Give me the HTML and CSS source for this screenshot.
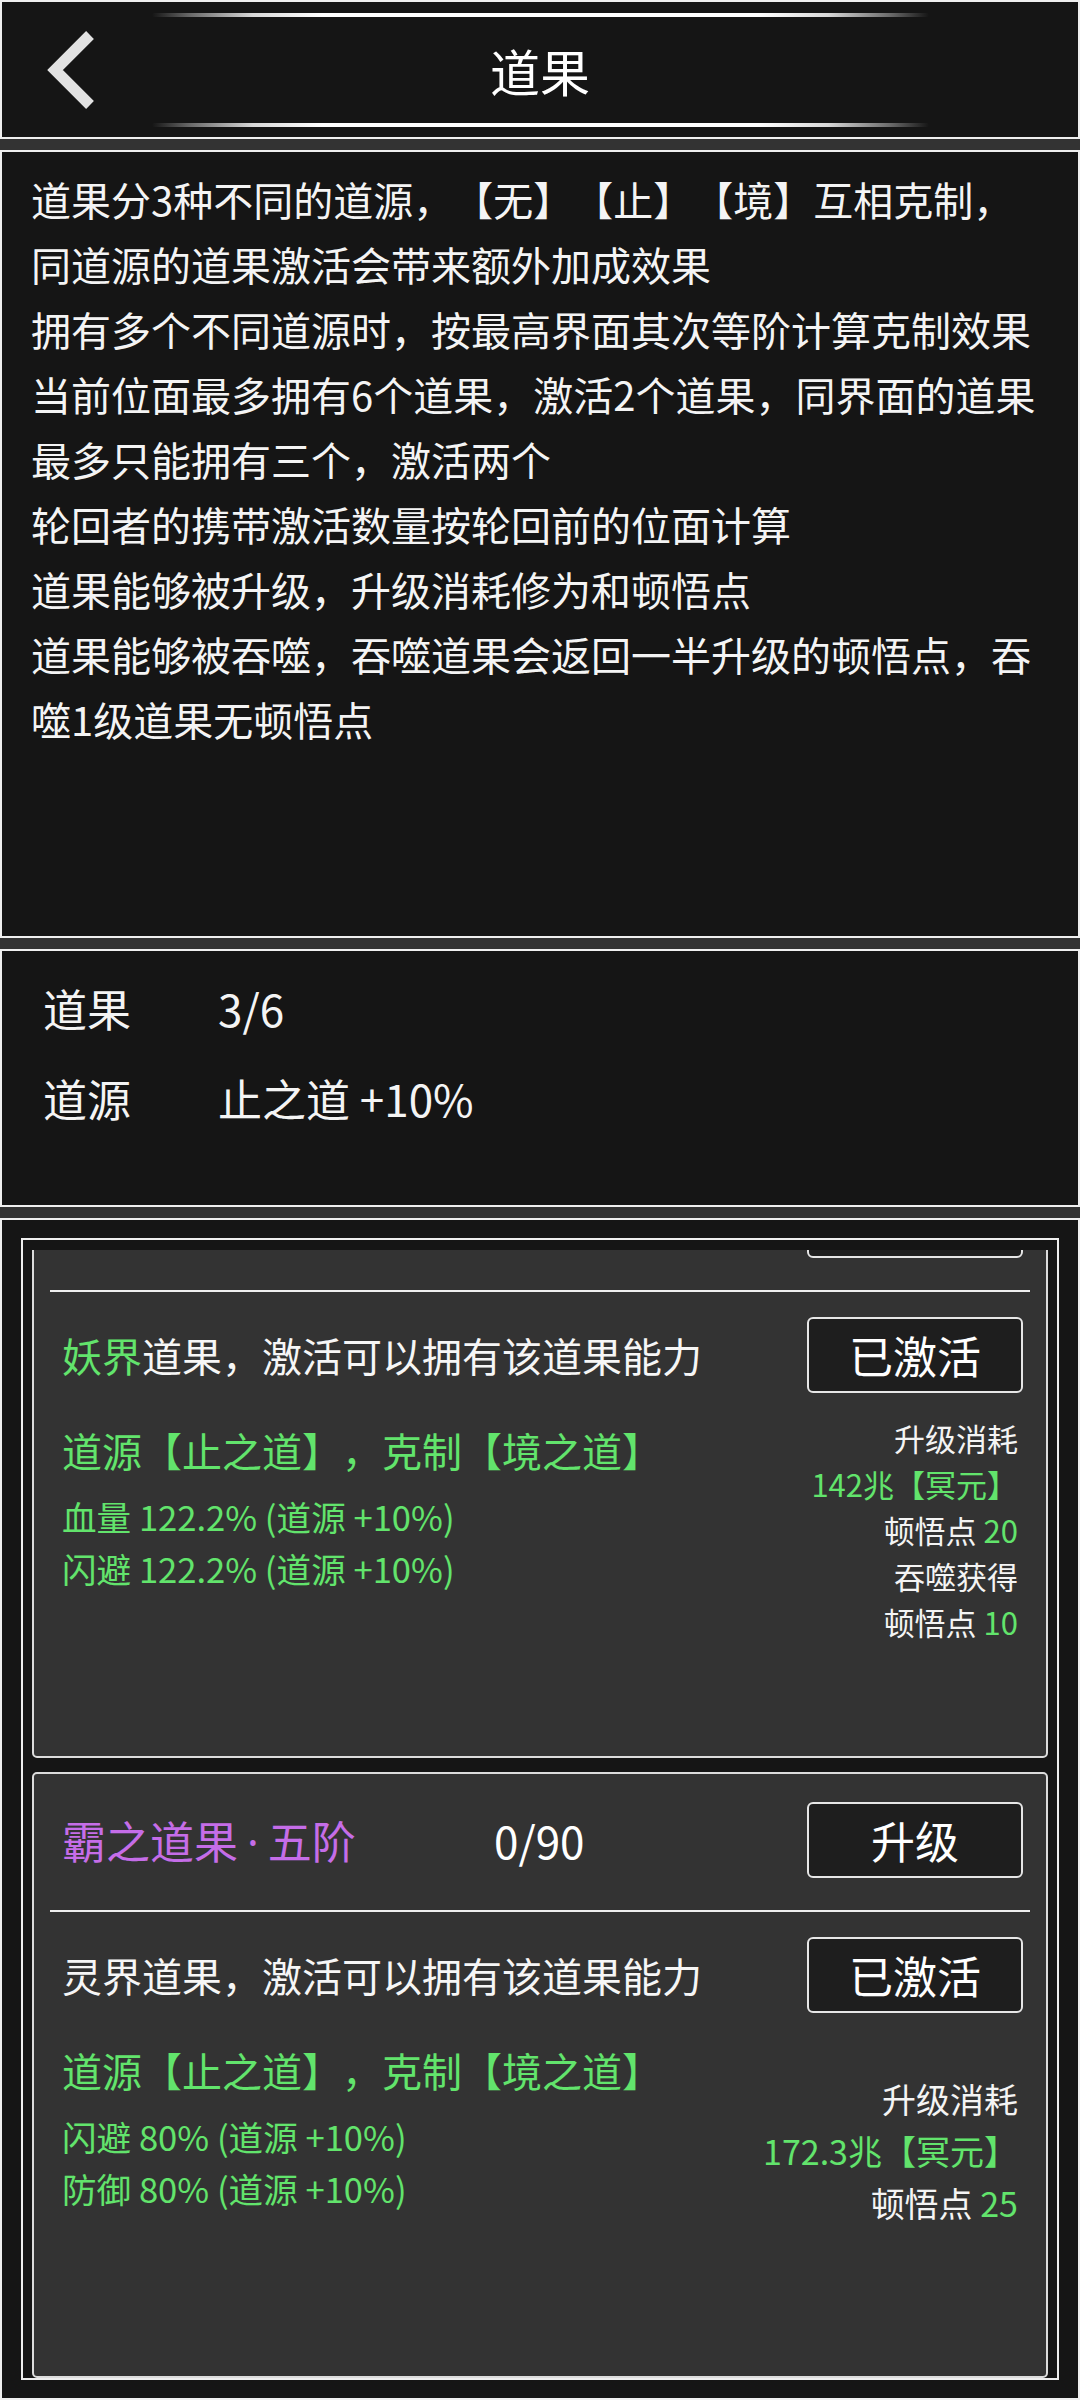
FILE: index.html
```html
<!DOCTYPE html>
<html lang="zh-CN">
<head>
<meta charset="utf-8">
<title>道果</title>
<link rel="stylesheet" href="styles.css">
</head>
<body>
  <header class="panel header">
    <div class="header__rule"></div>
    <div class="header__bar">
      <svg class="back" width="60" height="80" viewBox="0 0 60 80" aria-label="返回">
        <polyline points="50,5 15,40 50,75" fill="none" stroke="#e2e2e2" stroke-width="11" stroke-linejoin="miter" stroke-linecap="butt"/>
      </svg>
      <h1 class="header__title">道果</h1>
      <span></span>
    </div>
    <div class="header__rule"></div>
  </header>

  <section class="panel intro">
    <p>道果分3种不同的道源，【无】【止】【境】互相克制，同道源的道果激活会带来额外加成效果</p>
    <p>拥有多个不同道源时，按最高界面其次等阶计算克制效果</p>
    <p>当前位面最多拥有6个道果，激活2个道果，同界面的道果最多只能拥有三个，激活两个</p>
    <p>轮回者的携带激活数量按轮回前的位面计算</p>
    <p>道果能够被升级，升级消耗修为和顿悟点</p>
    <p>道果能够被吞噬，吞噬道果会返回一半升级的顿悟点，吞噬1级道果无顿悟点</p>
  </section>

  <section class="panel stats">
    <div class="stats__row"><span class="stats__label">道果</span><span>3/6</span></div>
    <div class="stats__row"><span class="stats__label">道源</span><span>止之道 +10%</span></div>
  </section>

  <section class="panel listpanel">
    <div class="frame">
      <div class="viewport">
        <div class="list">
          <article class="card">
            <div class="card__head">
              <span class="card__title"></span>
              <span class="card__count"></span>
              <span class="btn"></span>
            </div>
            <div class="card__divider"></div>
            <div class="card__desc">
              <span class="desc"><span class="green">妖界</span>道果，激活可以拥有该道果能力</span>
              <span class="btn">已激活</span>
            </div>
            <div class="card__body">
              <div class="effects">
                <div class="effects__src">道源【止之道】，克制【境之道】</div>
                <div class="effects__stat">血量 122.2% (道源 +10%)</div>
                <div class="effects__stat">闪避 122.2% (道源 +10%)</div>
              </div>
              <div class="cost">
                <div>升级消耗</div>
                <div class="green">142兆【冥元】</div>
                <div>顿悟点 <span class="green">20</span></div>
                <div>吞噬获得</div>
                <div>顿悟点 <span class="green">10</span></div>
              </div>
            </div>
          </article>

          <article class="card">
            <div class="card__head">
              <span class="card__title">霸之道果<span class="dot">·</span>五阶</span>
              <span class="card__count">0/90</span>
              <span class="btn">升级</span>
            </div>
            <div class="card__divider"></div>
            <div class="card__desc">
              <span class="desc">灵界道果，激活可以拥有该道果能力</span>
              <span class="btn">已激活</span>
            </div>
            <div class="card__body">
              <div class="effects">
                <div class="effects__src">道源【止之道】，克制【境之道】</div>
                <div class="effects__stat">闪避 80% (道源 +10%)</div>
                <div class="effects__stat">防御 80% (道源 +10%)</div>
              </div>
              <div class="cost cost--lg">
                <div>升级消耗</div>
                <div class="green">172.3兆【冥元】</div>
                <div>顿悟点 <span class="green">25</span></div>
              </div>
            </div>
          </article>
        </div>
      </div>
    </div>
  </section>
</body>
</html>
```

FILE: styles.css
```css
* {
  box-sizing: border-box;
  margin: 0;
  padding: 0;
}

html, body {
  width: 1080px;
  height: 2400px;
}

body {
  background: #333333;
  font-family: "Noto Sans CJK SC", "Noto Sans", sans-serif;
  color: #f4f4f4;
  overflow: hidden;
  display: flex;
  flex-direction: column;
  gap: 11px;
  text-spacing-trim: space-all;
  font-feature-settings: "palt" 0, "halt" 0;
}

.panel {
  background: #151515;
  border: 2px solid #efefef;
  flex: none;
}

.green { color: #62e46c; }

/* Header */
.header {
  height: 139px;
  padding-top: 11px;
  display: flex;
  flex-direction: column;
}

.header__rule {
  width: 777px;
  height: 4px;
  margin: 0 auto;
  border-radius: 2px;
  background: linear-gradient(90deg,
    rgba(90, 90, 90, 0) 0%,
    #6a6a6a 5%,
    #d8d8d8 13%,
    #ffffff 22%,
    #ffffff 78%,
    #d8d8d8 87%,
    #6a6a6a 95%,
    rgba(90, 90, 90, 0) 100%);
}

.header__bar {
  height: 106px;
  display: grid;
  grid-template-columns: 1fr auto 1fr;
  align-items: center;
}

.back {
  display: block;
  margin-left: 38px;
}

.header__title {
  font-size: 50px;
  font-weight: 400;
  line-height: 1;
  color: #ffffff;
}

/* Intro text */
.intro {
  height: 788px;
  padding: 15px 37px 0 29px;
  font-size: 40px;
  line-height: 65px;
}

/* Stats */
.stats {
  height: 258px;
  padding: 12px 0 0 41px;
  font-size: 44px;
  line-height: 90px;
}

.stats__row {
  display: flex;
}

.stats__label {
  width: 175px;
}

/* List */
.listpanel {
  height: 1182px;
  padding: 18px 19px;
}

.frame {
  height: 100%;
  border: 2px solid #eeeeee;
  padding: 10px 9px 0;
}

.viewport {
  height: 1128px;
  overflow: hidden;
}

.list {
  margin-top: -98px;
  display: flex;
  flex-direction: column;
  gap: 14px;
}

.card {
  height: 606px;
  flex: none;
  background: #333333;
  border: 2px solid #dcdcdc;
  border-radius: 5px;
  padding-top: 28px;
}

.card__head {
  height: 76px;
  display: flex;
  align-items: center;
  padding: 0 23px 0 28px;
  font-size: 44px;
}

.card__title {
  width: 432px;
  color: #c56de8;
}

.dot {
  font-family: "Noto Sans", sans-serif;
  padding: 0 9px;
}

.card__count {
  flex: 1;
  color: #ffffff;
}

.btn {
  width: 216px;
  height: 76px;
  flex: none;
  display: flex;
  align-items: center;
  justify-content: center;
  margin-left: auto;
  background: #1e1e1e;
  border: 2px solid #e6e6e6;
  border-radius: 6px;
  font-size: 44px;
  color: #ffffff;
}

.card__divider {
  height: 2px;
  margin: 32px 16px 0;
  background: #efefef;
}

.card__desc {
  height: 76px;
  margin-top: 25px;
  display: flex;
  align-items: center;
  padding: 0 23px 0 28px;
}

.desc {
  font-size: 40px;
  color: #f6f6f6;
}

.card__body {
  display: flex;
  justify-content: space-between;
  align-items: flex-start;
  padding: 0 28px;
}

.effects {
  margin-top: 17px;
  color: #62e46c;
}

.effects__src {
  font-size: 40px;
  line-height: 80px;
}

.effects__stat {
  font-size: 34.6px;
  line-height: 52px;
}

.cost {
  margin-top: 22px;
  text-align: right;
  font-size: 31px;
  line-height: 46px;
  color: #f4f4f4;
}

.cost--lg {
  margin-top: 60px;
  font-size: 34px;
  line-height: 52px;
}
```
